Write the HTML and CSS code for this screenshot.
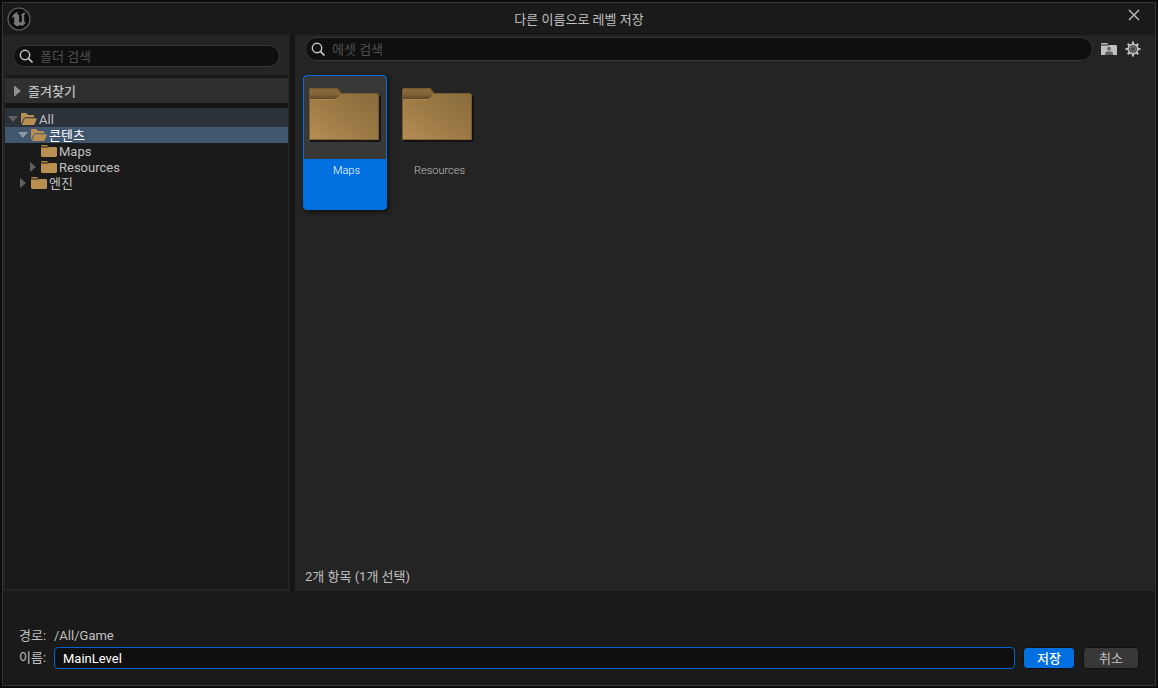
FILE: index.html
```html
<!DOCTYPE html>
<html lang="ko">
<head>
<meta charset="utf-8">
<title>다른 이름으로 레벨 저장</title>
<link rel="stylesheet" href="styles.css">
</head>
<body>
<svg class="defs" aria-hidden="true">
  <defs>
    <linearGradient id="folder-front" x1="0" y1="1" x2="1" y2="0">
      <stop offset="0" stop-color="#b58e54"/>
      <stop offset="0.5" stop-color="#9b7944"/>
      <stop offset="1" stop-color="#86693b"/>
    </linearGradient>
    <linearGradient id="folder-tab" x1="0" y1="0" x2="0" y2="1">
      <stop offset="0" stop-color="#8b6b3c"/>
      <stop offset="0.55" stop-color="#83653a"/>
      <stop offset="1" stop-color="#5f4827"/>
    </linearGradient>
    <symbol id="search" viewBox="0 0 14 14">
      <circle cx="6" cy="6" r="4.7" fill="none" stroke="currentColor" stroke-width="1.4"/>
      <path d="M9.4 9.4 13 13" stroke="currentColor" stroke-width="1.7" stroke-linecap="round"/>
    </symbol>
    <symbol id="folder" viewBox="0 0 16 12">
      <path d="M0 1.500V.8L.8 0H6l1.500 1.500z" fill="#a98349"/>
      <path d="M0 2.600h7L8.300 2H15l1 1v8l-1 1H1l-1-1z" fill="#b98f52"/>
    </symbol>
    <symbol id="folder-open" viewBox="0 0 16 12">
      <path d="M0 11V.8L.8 0H5l2 2h5.300l.9 1v1.200H4.300L3 5z" fill="#b98f52"/>
      <path d="M3.700 5.200H16L13.300 12H.8z" fill="#b98f52"/>
    </symbol>
    <symbol id="folder-large" viewBox="0 0 74 56">
      <path d="M3 7h66l3 1v44l-1 2H1v-2z" fill="#111" opacity=".85"/>
      <path d="M0 52V2l2-2h25l2 1 3 4h36l2 2v45z" fill="url(#folder-front)"/>
      <path d="M0 11V2l2-2h25l2 1 3 4-4 5-2 1z" fill="url(#folder-tab)"/>
      <path d="M.5 52V2.300L2.300.5H27l1.800 1L32 5.500h35.500l2 2V52" fill="none" stroke="#765b32"/>
      <path d="M1 51.500h68" stroke="#806238"/>
      <path d="M1 11.500h25.500l2-1" fill="none" stroke="#b28b53" opacity=".7"/>
    </symbol>
  </defs>
</svg>
<main class="window">
  <header class="titlebar">
    <svg class="logo" viewBox="0 0 24 24" aria-hidden="true">
      <circle cx="12" cy="12" r="11" fill="#0c0c0c" stroke="#606060" stroke-width="1.2"/>
      <path d="M11 4.700C7.800 5.600 5.200 8.200 4.800 11.500c1-1.500 1.700-2 2.400-1.800v5.600c0 .8-.4 1-.9 1 1 1.600 2.700 2.800 4.900 3l1.500-1.500 2.100 1.300c1.900-.8 3.500-2.400 4.300-4.500-1.200 1-1.900 1-1.900.1V8.200c.2-1.200 1-2 2-2.700-2.200-.1-4.300 1-5.300 2.200.6 0 .9.300.9.900v6.200c-.7.9-2.700 1.100-2.700-.3V8.600c-.2-.9-1.100-1.200-1.900-1 .1-1.200.4-2.100.8-2.900z" fill="#777"/>
    </svg>
    <h1 class="title">다른 이름으로 레벨 저장</h1>
    <button class="close" type="button" aria-label="닫기">
      <svg viewBox="0 0 12 12"><path d="M1 1l10 10M11 1 1 11" stroke="currentColor" stroke-width="1.4"/></svg>
    </button>
  </header>

  <div class="browser">
    <aside class="sidebar">
      <div class="folder-search">
        <label class="search">
          <svg class="search-icon" aria-hidden="true"><use href="#search"/></svg>
          <input type="search" placeholder="폴더 검색" aria-label="폴더 검색">
        </label>
      </div>
      <button class="favorites" type="button" aria-expanded="false">
        <svg class="arrow-large" viewBox="0 0 7 10"><path d="M0 0h1l6 5-6 5H0z" fill="currentColor"/></svg><span>즐겨찾기</span>
      </button>
      <ul class="tree" role="tree">
        <li class="row root" role="treeitem" aria-expanded="true">
          <svg class="arrow" viewBox="0 0 10 10"><path d="M0 2h10L5 8z" fill="currentColor"/></svg>
          <svg class="folder"><use href="#folder-open"/></svg><span>All</span>
        </li>
        <li class="row depth-1 selected" role="treeitem" aria-expanded="true" aria-selected="true">
          <svg class="arrow" viewBox="0 0 10 10"><path d="M0 2h10L5 8z" fill="currentColor"/></svg>
          <svg class="folder"><use href="#folder-open"/></svg><span>콘텐츠</span>
        </li>
        <li class="row depth-2" role="treeitem">
          <span class="arrow"></span>
          <svg class="folder"><use href="#folder"/></svg><span>Maps</span>
        </li>
        <li class="row depth-2" role="treeitem" aria-expanded="false">
          <svg class="arrow" viewBox="0 0 10 10"><path d="M2 0l6 5-6 5z" fill="currentColor"/></svg>
          <svg class="folder"><use href="#folder"/></svg><span>Resources</span>
        </li>
        <li class="row depth-1" role="treeitem" aria-expanded="false">
          <svg class="arrow" viewBox="0 0 10 10"><path d="M2 0l6 5-6 5z" fill="currentColor"/></svg>
          <svg class="folder"><use href="#folder"/></svg><span>엔진</span>
        </li>
      </ul>
    </aside>

    <section class="assets">
      <div class="toolbar">
        <label class="search asset-search">
          <svg class="search-icon" aria-hidden="true"><use href="#search"/></svg>
          <input type="search" placeholder="에셋 검색" aria-label="에셋 검색">
        </label>
        <button class="tool" type="button" aria-label="개발자 폴더">
          <svg viewBox="0 0 16 16">
            <path d="M0 3.500V2.500L.8 2H6l1.500 1.500z" fill="#c0c0c0"/>
            <path d="M0 4.500h7.500L8.500 4H15l1 1v9H0z" fill="#c0c0c0"/>
            <circle cx="8" cy="7.700" r="1.900" fill="#666"/>
            <path d="M4 14v-1c0-2 1.500-2.700 4-2.700s4 .7 4 2.700v1z" fill="#666"/>
          </svg>
        </button>
        <button class="tool" type="button" aria-label="설정">
          <svg viewBox="0 0 16 16">
            <g stroke="#c0c0c0" stroke-width="2">
              <path d="M8 .5v15M.5 8h15M2.700 2.700l10.600 10.600M13.300 2.700 2.700 13.300"/>
            </g>
            <circle cx="8" cy="8" r="4.700" fill="#242424" stroke="#c0c0c0" stroke-width="1.700"/>
            <circle cx="8" cy="8" r="2.600" fill="#444" stroke="#777" stroke-width="1.100"/>
          </svg>
        </button>
      </div>
      <div class="grid">
        <button class="tile active" type="button" aria-pressed="true">
          <span class="thumb"><svg><use href="#folder-large"/></svg></span>
          <span class="name">Maps</span>
        </button>
        <button class="tile" type="button" aria-pressed="false">
          <span class="thumb"><svg><use href="#folder-large"/></svg></span>
          <span class="name">Resources</span>
        </button>
      </div>
      <p class="status">2개 항목 (1개 선택)</p>
    </section>
  </div>

  <form class="footer">
    <span class="label">경로:</span>
    <output class="path">/All/Game</output>
    <label class="label name-label" for="level-name">이름:</label>
    <input class="name-input" id="level-name" type="text" value="MainLevel">
    <div class="actions">
      <button class="btn primary" type="button">저장</button>
      <button class="btn" type="button">취소</button>
    </div>
  </form>
</main>
</body>
</html>
```
FILE: styles.css
```css
* { box-sizing: border-box; }

body {
  margin: 0;
  min-height: 100vh;
  display: flex;
  padding: 2px;
  background: #0d0d0d;
  color: #c0c0c0;
  font: 13px/16px Roboto, "Noto Sans CJK KR", sans-serif;
}

button, input { font: inherit; color: inherit; }
button { border: 0; padding: 0; background: none; }
svg { display: block; flex: none; }
.defs { position: absolute; width: 0; height: 0; }

.window {
  flex: 1;
  min-width: 0;
  display: flex;
  flex-direction: column;
  border: 1px solid #363636;
  background: #1a1a1a;
}

.titlebar {
  display: grid;
  grid-template-columns: 32px 1fr 32px;
  align-items: center;
  height: 32px;
}
.logo { width: 24px; height: 24px; margin-left: 4px; }
.title {
  margin: 0;
  padding-top: 2px;
  font-size: 13px;
  font-weight: 400;
  text-align: center;
}
.close { justify-self: center; padding-bottom: 9px; margin-right: 10px; }
.close svg { width: 12px; height: 12px; }

.browser {
  flex: 1;
  display: grid;
  grid-template-columns: 287px 1fr;
  gap: 5px;
  background: #151515;
}

.sidebar {
  display: flex;
  flex-direction: column;
  padding: 0 2px 2px;
  background: #242424;
}
.folder-search {
  padding: 10px 8px 8px;
  border-bottom: 3px solid #1a1a1a;
}
.search {
  display: flex;
  align-items: center;
  gap: 7px;
  height: 22px;
  padding: 0 5px;
  border: 1px solid #363636;
  border-radius: 12px;
  background: #0f0f0f;
}
.search-icon { width: 14px; height: 14px; color: #c8c8c8; }
.search input {
  flex: 1;
  min-width: 0;
  height: 20px;
  padding: 0;
  border: 0;
  outline: 0;
  background: none;
}
.search input::placeholder { color: #505050; opacity: 1; }

.favorites {
  display: flex;
  align-items: center;
  gap: 7px;
  height: 25px;
  padding-left: 9px;
  background: #2f2f2f;
  font-weight: 500;
}
.favorites span { padding-top: 2px; }
.arrow-large { width: 7px; height: 10px; color: #909090; }

.tree {
  flex: 1;
  margin: 0;
  padding: 0;
  border-top: 5px solid #151515;
  background: #1a1a1a;
  list-style: none;
}
.row {
  display: flex;
  align-items: center;
  height: 16px;
  padding-left: 3px;
}
.row span { padding-top: 2px; white-space: nowrap; }
.row .arrow { flex: none; width: 10px; height: 10px; margin-right: 3px; color: #606060; }
.folder { width: 16px; height: 12px; margin-right: 2px; }
.root { height: 19px; padding-top: 3px; background: #2b323a; }
.depth-1 { padding-left: 13px; }
.depth-2 { padding-left: 23px; }
.selected { background: #40576f; color: #fff; }
.selected .arrow { color: #8d98a5; }

.assets {
  display: flex;
  flex-direction: column;
  min-width: 0;
  background: #242424;
}
.toolbar {
  display: flex;
  align-items: center;
  gap: 8px;
  padding: 2px 14px 0 10px;
}
.asset-search { flex: 1; height: 24px; }
.tool svg { width: 16px; height: 16px; }

.grid {
  flex: 1;
  display: flex;
  align-items: flex-start;
  gap: 9px;
  padding: 14px 8px;
}
.tile {
  width: 84px;
  height: 135px;
  display: flex;
  flex-direction: column;
  border: 1px solid transparent;
  border-radius: 4px;
  overflow: hidden;
  font-size: 11px;
  font-weight: 300;
}
.thumb, .name { width: 100%; }
.thumb { height: 83px; padding: 12px 0 0 5px; }
.thumb svg { width: 74px; height: 56px; }
.name { flex: 1; padding: 4px 0 0 3px; text-align: center; }
.active {
  border-color: #0070e0;
  background: #0070e0;
  color: #fff;
  box-shadow: 2px 2px 4px #111;
}
.active .thumb { background: #383838; border-radius: 3px 3px 0 0; }

.status { margin: 0; padding: 0 10px 6px; }

.footer {
  display: grid;
  grid-template-columns: 35px 1fr auto;
  row-gap: 3px;
  align-items: center;
  padding: 37px 16px 16px;
}
.path { grid-column: 2 / 4; }
.name-input {
  width: 100%;
  height: 22px;
  padding: 0 8px;
  border: 1px solid #0064c8;
  border-radius: 4px;
  outline: 0;
  background: #0f0f0f;
  color: #fff;
}
.actions { display: flex; gap: 8px; padding-left: 8px; }
.btn {
  width: 56px;
  height: 22px;
  padding-top: 1px;
  border: 1px solid #111;
  border-radius: 4px;
  background: #383838;
}
.primary { width: 52px; background: #0070e0; color: #fff; font-weight: 500; }
```
